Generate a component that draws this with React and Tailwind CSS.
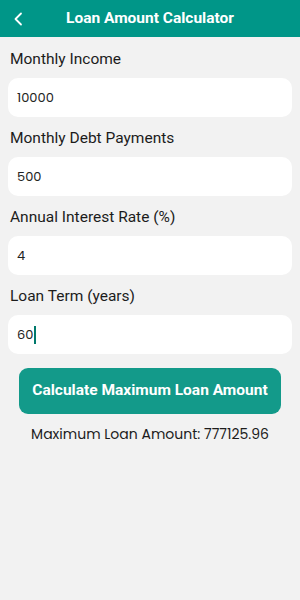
import React, { useState } from 'react';

const fields = [
  { label: 'Monthly Income', value: '10000' },
  { label: 'Monthly Debt Payments', value: '500' },
  { label: 'Annual Interest Rate (%)', value: '4' },
  { label: 'Loan Term (years)', value: '60', focused: true },
];

export default function App() {
  const [result] = useState('777125.96');

  return (
    <div className="w-[300px] h-[600px] bg-[#f2f2f2] font-['Roboto',sans-serif]">
      {/* header */}
      <div className="h-[37px] bg-[#009688] flex items-center relative">
        <svg className="absolute left-[13px] top-[12px]" width="12" height="14" viewBox="0 0 12 14" fill="none">
          <path d="M8 1.5 L2.5 7 L8 12.5" stroke="white" strokeWidth="1.8" strokeLinecap="round" strokeLinejoin="round" />
        </svg>
        <h1 className="w-full text-center text-white font-bold text-[15.5px]">Loan Amount Calculator</h1>
      </div>

      <div className="px-[8px] pt-[11px]">
        {fields.map(f => (
          <div key={f.label} className="mb-[10px]">
            <div className="pl-[2px] h-[24px] flex items-center text-[15.5px] text-[#1c1c1c] mb-[6px]">{f.label}</div>
            <div className="h-[39px] bg-white rounded-[10px] flex items-center pl-[9px] text-[13px] text-[#222] font-['Poppins','Lato',sans-serif]">
              {f.value}
              {f.focused && <span className="inline-block w-[1.5px] h-[18px] bg-[#00796b] ml-[1px]"></span>}
            </div>
          </div>
        ))}

        <button className="mt-[4px] mx-[11px] w-[262px] h-[46px] rounded-[9px] bg-[#139a8a] text-white font-bold text-[15.5px]">
          Calculate Maximum Loan Amount
        </button>
        <p className="mt-[10px] text-center text-[14px] text-[#1c1c1c] font-['Poppins','Lato',sans-serif]">
          Maximum Loan Amount: {result}
        </p>
      </div>
    </div>
  );
}
